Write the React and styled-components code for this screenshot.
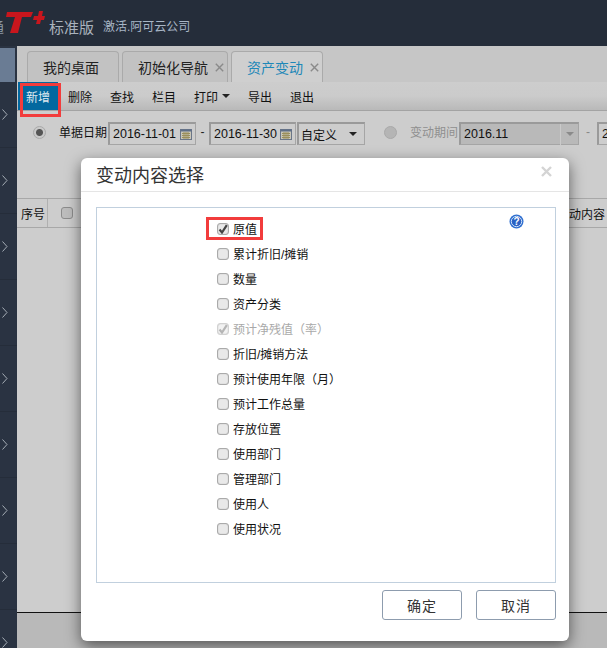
import React from 'react';
import styled, { createGlobalStyle } from 'styled-components';

const GlobalStyle = createGlobalStyle`
    html, body {
        margin: 0;
        padding: 0;
        background: #cdcdcd;
    }
    * {
        box-sizing: border-box;
    }
`

const FONT = `"Liberation Sans", "Noto Sans CJK SC", sans-serif`

const Page = styled.div`
    position: relative;
    width: 607px;
    height: 648px;
    overflow: hidden;
    display: flex;
    flex-direction: column;
    font-family: ${FONT};
    font-size: 12px;
    color: #111;
`
const TopBar = styled.header`
    height: 46px;
    flex: none;
    background: #252d3a;
    display: flex;
    align-items: center;
    overflow: hidden;
`
const BrandCut = styled.span`
    width: 4px;
    margin-top: 6px;
    overflow: hidden;
    display: flex;
    justify-content: flex-end;
    font-size: 15px;
    color: #8b96a3;
    white-space: nowrap;
`
const Edition = styled.span`
    margin-top: 6px;
    font-size: 15px;
    color: #a9b2bc;
`
const Company = styled.span`
    margin-left: 9px;
    margin-top: 5px;
    font-size: 12px;
    color: #a8b6c6;
`
const LogoSvg = styled.svg`
    width: 45px;
    height: 28px;
    flex: none;
`
const Body = styled.div`
    flex: 1;
    display: flex;
    min-height: 0;
`
const Sidebar = styled.nav`
    width: 17px;
    flex: none;
    background: #2a3342;
    padding-top: 2px;
    overflow: hidden;
`
const SideActive = styled.div`
    width: 15px;
    height: 34px;
    background: #6a7c94;
`
const SideItem = styled.div`
    height: 66px;
    display: flex;
    align-items: center;
    padding: 0 0 1px 2px;
    border-bottom: 1px solid #252d3a;
`
const Main = styled.main`
    flex: 1;
    min-width: 0;
    display: flex;
    flex-direction: column;
    background: #cdcdcd;
    overflow: hidden;
`
const Tabs = styled.div`
    height: 36px;
    flex: none;
    display: flex;
    align-items: flex-end;
    gap: 3px;
    padding-left: 10px;
    background: #c6c6c6;
`
const Tab = styled.div`
    height: 31px;
    width: ${p => p.$w}px;
    display: flex;
    align-items: center;
    padding-left: 15px;
    border: 1px solid #aaa;
    border-bottom: none;
    border-radius: 4px 4px 0 0;
    background: ${p => (p.$active ? '#cfcfcf' : '#c2c2c2')};
    color: ${p => (p.$active ? '#1e88b8' : '#222')};
    font-size: 14px;
`
const TabCloseIcon = styled.svg`
    width: 9px;
    height: 9px;
    margin-left: 7px;
    flex: none;
`
const Toolbar = styled.div`
    height: 29px;
    flex: none;
    display: flex;
    align-items: stretch;
    background: linear-gradient(#cdcdcd, #cbcbcb 50%, #b9b9b9);
    border-bottom: 1px solid #a3a3a3;
`
const ToolButton = styled.div`
    width: ${p => p.$w || 42}px;
    margin-left: ${p => (p.$primary ? '1px' : '0')};
    margin-right: ${p => (p.$primary ? '1px' : '0')};
    display: flex;
    align-items: center;
    justify-content: center;
    gap: 4px;
    background: ${p => (p.$primary ? '#03689f' : 'transparent')};
    color: ${p => (p.$primary ? '#dfe9f0' : '#111')};
`
const Caret = styled.i`
    width: 0;
    height: 0;
    border-left: 4px solid transparent;
    border-right: 4px solid transparent;
    border-top: 4px solid ${p => p.$color || '#222'};
`
const FilterRow = styled.div`
    height: 87px;
    flex: none;
    padding: 11px 0 0 16px;
    display: flex;
    align-items: flex-start;
    white-space: nowrap;
`
const Radio = styled.span`
    width: 13px;
    height: 13px;
    flex: none;
    margin: 4px 13px 0 ${p => p.$ml || 0}px;
    border-radius: 50%;
    border: 1px solid #a9a9a9;
    background: ${p => (p.$on ? 'radial-gradient(#555 0 3px, #c9c9c9 4px)' : '#b5b5b5')};
`
const FieldLabel = styled.span`
    line-height: 22px;
    color: ${p => (p.$muted ? '#8f8f8f' : '#111')};
`
const Field = styled.div`
    height: 23px;
    width: ${p => p.$w}px;
    flex: none;
    margin-left: ${p => p.$ml || 0}px;
    display: flex;
    align-items: center;
    justify-content: space-between;
    padding: 0 3px;
    border: 1px solid #a5a5a5;
    border-top: 2px solid #9a9a9a;
    border-left: 2px solid #9a9a9a;
    background: ${p => (p.$disabled ? '#b9b9b9' : '#cdcdcd')};
    font-size: 12.5px;
    color: #111;
`
const SelectField = styled(Field)`
    font-size: 12px;
    padding: 0 7px 0 2px;
`
const Dash = styled.span`
    width: ${p => p.$w || 13}px;
    flex: none;
    text-align: center;
    line-height: 20px;
    color: ${p => p.$color || '#222'};
`
const CalendarIcon = styled.svg`
    width: 12px;
    height: 12px;
    flex: none;
`
const ComboArrow = styled.span`
    width: 18px;
    height: 21px;
    margin-right: -3px;
    display: flex;
    align-items: center;
    justify-content: center;
    border-left: 1px solid #cacaca;
`
const TableHead = styled.div`
    height: 30px;
    flex: none;
    display: flex;
    align-items: center;
    white-space: nowrap;
    border-top: 1px solid #a8a8a8;
    border-bottom: 1px solid #a8a8a8;
`
const HeadCell = styled.div`
    width: 31px;
    height: 100%;
    flex: none;
    display: flex;
    align-items: center;
    padding-left: 4px;
    border-right: 1px solid #b0b0b0;
`
const HeadCheck = styled.span`
    width: 12px;
    height: 12px;
    margin-left: 13px;
    border: 1px solid #8c8c8c;
    border-radius: 3px;
    background: #bdbdbd;
`
const HeadRight = styled.span`
    margin-left: auto;
    padding-right: 2px;
`
const TableBody = styled.div`
    flex: 1;
`
const Footer = styled.div`
    height: 36px;
    flex: none;
    background: #b9b9b9;
    border-top: 1px solid #111;
`
const Modal = styled.section`
    position: absolute;
    left: 81px;
    top: 158px;
    width: 488px;
    height: 483px;
    display: flex;
    flex-direction: column;
    background: #fff;
    border-radius: 6px;
    box-shadow: 0 5px 15px rgba(0, 0, 0, 0.55);
`
const ModalHeader = styled.div`
    height: 34px;
    flex: none;
    display: flex;
    align-items: center;
    justify-content: space-between;
    padding: 0 17px 2px 15px;
    border-bottom: 1px solid #e5e5e5;
    font-size: 18px;
    color: #333;
`
const ModalCloseIcon = styled.svg`
    width: 11px;
    height: 11px;
    margin-top: -5px;
    flex: none;
`
const ModalBody = styled.div`
    flex: 1;
    display: flex;
    flex-direction: column;
    padding: 15px 13px 0 15px;
`
const Panel = styled.div`
    position: relative;
    height: 376px;
    flex: none;
    padding: 8px 0 0 120px;
    border: 1px solid #c1d0de;
`
const OptionRow = styled.label`
    height: 25px;
    display: flex;
    align-items: center;
    gap: 4px;
    font-size: 12px;
    color: ${p => (p.$disabled ? '#a9a9a9' : '#111')};
`
const Box = styled.span`
    width: 12px;
    height: 12px;
    flex: none;
    display: flex;
    align-items: center;
    justify-content: center;
    border: 1px solid ${p => (p.$disabled ? '#d2d2d2' : '#aaa')};
    border-radius: 3px;
    background: ${p => (p.$disabled ? '#f2f2f2' : '#e9e9e9')};
    box-shadow: inset 0 0 1px #999;
`
const Help = styled.svg`
    position: absolute;
    left: 412px;
    top: 6px;
    width: 15px;
    height: 15px;
`
const HelpMark = styled.text`
    font-family: "Liberation Sans", sans-serif;
    font-size: 10px;
    font-weight: 700;
    fill: #fff;
`
const ModalFooter = styled.div`
    display: flex;
    justify-content: flex-end;
    gap: 14px;
    padding-top: 7px;
`
const ModalButton = styled.div`
    width: 80px;
    height: 30px;
    display: flex;
    align-items: center;
    justify-content: center;
    letter-spacing: 1px;
    border: 1px solid #8d9cae;
    border-radius: 3px;
    background: #fff;
    font-size: 14px;
    color: #333;
`
const Highlight = styled.div`
    position: absolute;
    left: ${p => p.$x}px;
    top: ${p => p.$y}px;
    width: ${p => p.$w}px;
    height: ${p => p.$h}px;
    border: 3px solid #f23c3c;
    pointer-events: none;
`

const LogoMark = () => (
    <LogoSvg viewBox="0 0 45 28">
        <polygon points="3,3 29,3 27,8 18,8 14,24 6,24 11,8 2,8" fill="#c8161d" />
        <polygon points="35,2 39,2 38,7 41,7 40,11 37,11 36,15 32,15 33,11 29,11 30,7 34,7" fill="#c8161d" />
    </LogoSvg>
)

const Calendar = () => (
    <CalendarIcon viewBox="0 0 12 12">
        <rect x="0.5" y="1.5" width="11" height="10" fill="#c9c6b8" stroke="#6a7688" />
        <rect x="0.5" y="1.5" width="11" height="2" fill="#5f6f88" />
        <path d="M2 5.5h8M2 7.5h8M2 9.5h8M4 4v7M6 4v7M8 4v7" stroke="#9a8f5c" strokeWidth="1" />
    </CalendarIcon>
)

const SideChevron = () => (
    <svg width="6" height="11" viewBox="0 0 6 11">
        <path d="M0.5 0.5 L5 5.5 L0.5 10.5" fill="none" stroke="#a6adb6" strokeWidth="1" />
    </svg>
)

const TabClose = () => (
    <TabCloseIcon viewBox="0 0 9 9">
        <path d="M0.8 0.8 L8.2 8.2 M8.2 0.8 L0.8 8.2" stroke="#8a8a8a" strokeWidth="1.4" />
    </TabCloseIcon>
)

const Check = ({ color }) => (
    <svg width="10" height="10" viewBox="0 0 10 10">
        <path d="M1.5 5.5 L4 8.5 L8.8 1.2" fill="none" stroke={color} strokeWidth="2.2" />
    </svg>
)

const OPTIONS = [
    { label: '原值', checked: true },
    { label: '累计折旧/摊销' },
    { label: '数量' },
    { label: '资产分类' },
    { label: '预计净残值（率）', checked: true, disabled: true },
    { label: '折旧/摊销方法' },
    { label: '预计使用年限（月）' },
    { label: '预计工作总量' },
    { label: '存放位置' },
    { label: '使用部门' },
    { label: '管理部门' },
    { label: '使用人' },
    { label: '使用状况' },
]

const App = () => {
    return (
        <Page>
            <GlobalStyle />
            <TopBar>
                <BrandCut>通</BrandCut>
                <LogoMark />
                <Edition>标准版</Edition>
                <Company>激活.阿可云公司</Company>
            </TopBar>
            <Body>
                <Sidebar>
                    <SideActive />
                    {Array.from({ length: 9 }).map((_, i) => (
                        <SideItem key={i}>
                            <SideChevron />
                        </SideItem>
                    ))}
                </Sidebar>
                <Main>
                    <Tabs>
                        <Tab $w={92}>我的桌面</Tab>
                        <Tab $w={106}>初始化导航<TabClose /></Tab>
                        <Tab $w={92} $active>资产变动<TabClose /></Tab>
                    </Tabs>
                    <Toolbar>
                        <ToolButton $primary $w={40}>新增</ToolButton>
                        <ToolButton>删除</ToolButton>
                        <ToolButton>查找</ToolButton>
                        <ToolButton>栏目</ToolButton>
                        <ToolButton $w={54}>打印<Caret /></ToolButton>
                        <ToolButton>导出</ToolButton>
                        <ToolButton>退出</ToolButton>
                    </Toolbar>
                    <FilterRow>
                        <Radio $on />
                        <FieldLabel>单据日期</FieldLabel>
                        <Field $w={88} $ml={1}>2016-11-01<Calendar /></Field>
                        <Dash>-</Dash>
                        <Field $w={87}>2016-11-30<Calendar /></Field>
                        <SelectField $w={68} $ml={1}>自定义<Caret /></SelectField>
                        <Radio $ml={19} />
                        <FieldLabel $muted>变动期间</FieldLabel>
                        <Field $w={120} $ml={1} $disabled>
                            2016.11
                            <ComboArrow><Caret $color="#8a8a8a" /></ComboArrow>
                        </Field>
                        <Dash $w={18} $color="#888">-</Dash>
                        <Field $w={40}>2</Field>
                    </FilterRow>
                    <TableHead>
                        <HeadCell>序号</HeadCell>
                        <HeadCheck />
                        <HeadRight>动内容</HeadRight>
                    </TableHead>
                    <TableBody />
                    <Footer />
                </Main>
            </Body>
            <Highlight $x={20} $y={83} $w={41} $h={34} />
            <Modal>
                <ModalHeader>
                    变动内容选择
                    <ModalCloseIcon viewBox="0 0 11 11">
                        <path d="M1 1 L10 10 M10 1 L1 10" stroke="#d4d4d4" strokeWidth="2.4" />
                    </ModalCloseIcon>
                </ModalHeader>
                <ModalBody>
                    <Panel>
                        <Help viewBox="0 0 15 15">
                            <circle cx="7.5" cy="7.5" r="7" fill="#2f6fd0" />
                            <circle cx="7.5" cy="7.5" r="5.2" fill="#2b62c4" stroke="#cfe0f7" strokeWidth="1" />
                            <HelpMark x="7.5" y="11" textAnchor="middle">?</HelpMark>
                        </Help>
                        {OPTIONS.map(o => (
                            <OptionRow key={o.label} $disabled={o.disabled}>
                                <Box $disabled={o.disabled}>
                                    {o.checked && <Check color={o.disabled ? '#b5b5b5' : '#444'} />}
                                </Box>
                                {o.label}
                            </OptionRow>
                        ))}
                    </Panel>
                    <ModalFooter>
                        <ModalButton>确定</ModalButton>
                        <ModalButton>取消</ModalButton>
                    </ModalFooter>
                </ModalBody>
            </Modal>
            <Highlight $x={206} $y={217} $w={57} $h={23} />
        </Page>
    )
}

export default App
